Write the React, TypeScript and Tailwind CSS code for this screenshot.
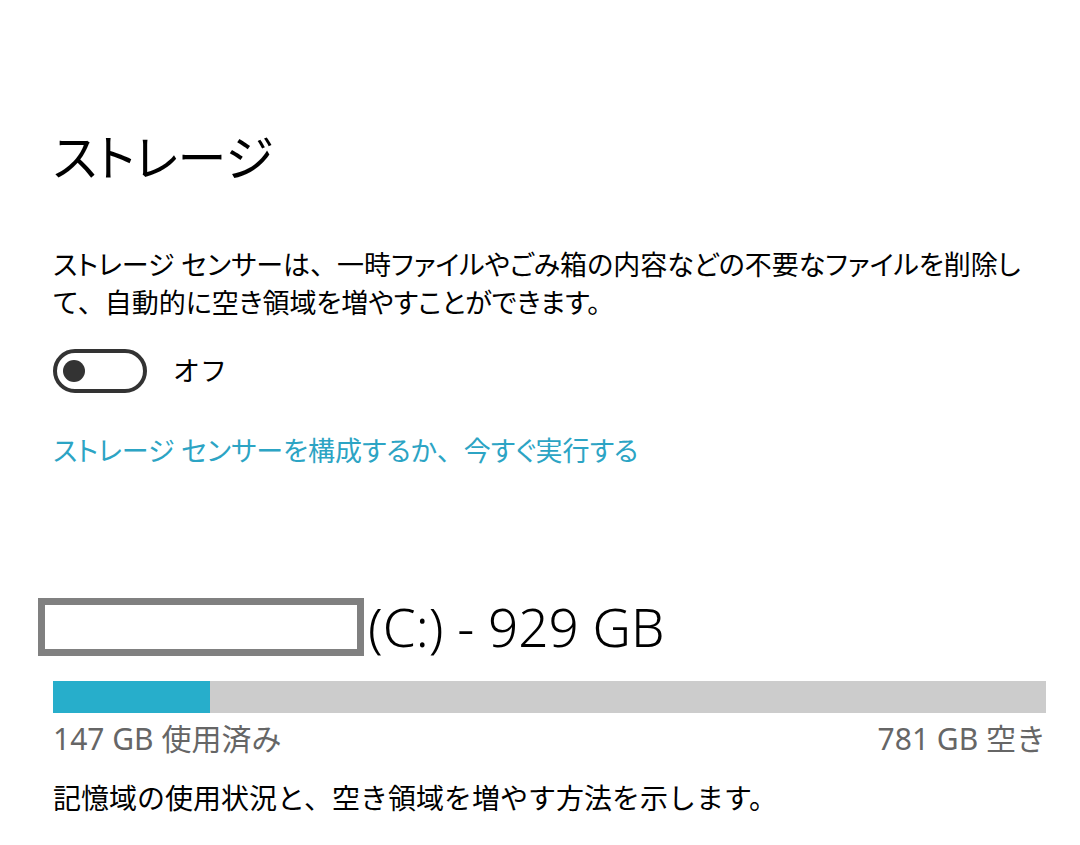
export default function App() {
  const used = 147;
  const total = 929;
  const pct = (used / total) * 100;

  return (
    <div
      className="min-h-screen w-[1080px] bg-white text-black pl-[53px] pr-[34px] pt-[127px]"
      style={{ fontFamily: '"Noto Sans", "Noto Sans CJK JP", sans-serif' }}
    >
      {/* Title */}
      <h1 className="text-[49px] leading-[60px] font-normal [font-feature-settings:'palt']">ストレージ</h1>

      {/* Description */}
      <p className="mt-[59px] text-[27px] leading-[38px]">
        <span className="[font-feature-settings:'palt']">
          ストレージ センサーは<span className="[font-feature-settings:normal]">、</span>一時ファイルやごみ箱の内容などの不要なファイルを削除し
        </span>
        <br />
        <span className="[font-feature-settings:'palt']">
          て<span className="[font-feature-settings:normal]">、</span>自動的に空き領域を増やすことができます。
        </span>
      </p>

      {/* Toggle */}
      <div className="mt-[27px] flex items-center h-[44px]">
        <div className="w-[94px] h-[44px] rounded-full border-[4px] border-[#333] flex items-center pl-[6px]">
          <div className="w-[22px] h-[22px] rounded-full bg-[#333]" />
        </div>
        <span className="ml-[26px] text-[27px] leading-[44px]">オフ</span>
      </div>

      {/* Link */}
      <a className="mt-[38px] block text-[27px] leading-[40px] text-[#2ca4c4] cursor-pointer">
        <span className="[font-feature-settings:'palt']">ストレージ センサーを構成するか</span>、
        <span className="[font-feature-settings:'palt']">今すぐ実行する</span>
      </a>

      {/* Drive */}
      <div className="mt-[127px] flex items-center h-[58px] -ml-[15px]">
        <div className="w-[326px] h-[58px] border-[7px] border-[#808080] bg-white" />
        <span className="ml-[4px] text-[53px] leading-[58px] font-light">(C:) - 929 GB</span>
      </div>

      {/* Usage bar */}
      <div className="mt-[25px] h-[32px] w-[993px] bg-[#cccccc] flex">
        <div className="h-full bg-[#27aecb]" style={{ width: `${pct}%` }} />
      </div>
      <div className="mt-[8px] w-[993px] flex justify-between text-[30px] leading-[36px] text-[#666]">
        <span>147 GB 使用済み</span>
        <span>781 GB 空き</span>
      </div>

      {/* Footer text */}
      <p className="mt-[22px] text-[28px] leading-[38px]">
        記憶域の使用状況と、空き領域を増やす方法を示します。
      </p>
    </div>
  );
}
